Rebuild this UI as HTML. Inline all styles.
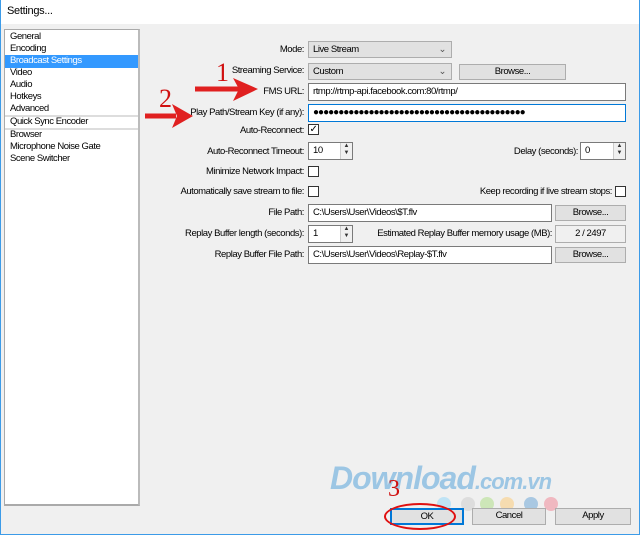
<!DOCTYPE html><html><head><style>
body{margin:0;width:640px;height:535px;overflow:hidden;background:#f0f0f0;font-family:"Liberation Sans",sans-serif;font-size:9.5px;letter-spacing:-0.45px;color:#000;position:relative}
div,span{position:absolute;box-sizing:border-box}
.l{text-align:right;white-space:nowrap;line-height:14px}
.in{background:#fff;border:1px solid #7a7a7a;padding:0 4px;line-height:15px;white-space:nowrap}
.cb{background:#e1e1e1;border:1px solid #adadad;padding:0 4px;line-height:15px}
.bt{background:#e1e1e1;border:1px solid #adadad;text-align:center;line-height:14px}
.ck{width:11px;height:11px;border:1px solid #333;background:#fff}
.sp{width:12px;background:#f0f0f0;border-left:1px solid #ccc;right:0;top:0;bottom:0;font-size:6px;line-height:7px;text-align:center;color:#333;letter-spacing:0}
.it{left:5px;white-space:nowrap;line-height:12px}
</style></head><body>
<div style="left:0;top:0;width:640px;height:24px;background:#fff"></div>
<div style="left:7px;top:5px;font-size:11px;letter-spacing:-0.3px">Settings...</div>
<div style="left:0;top:0;width:640px;height:535px;border:1px solid #3c9be8;border-top:0"></div>
<div style="left:4px;top:29px;width:136px;height:477px;background:#fff;border:1px solid #aaa;border-bottom:2px solid #aaa;border-right:2px solid #bbb">
<div style="left:0;top:25px;width:133px;height:13px;background:#3399ff"></div>
<div style="left:0;top:85px;width:133px;height:2px;background:#ddd"></div>
<div style="left:0;top:98px;width:133px;height:2px;background:#ddd"></div>
<div class="it" style="top:1px">General</div>
<div class="it" style="top:13px">Encoding</div>
<div class="it" style="top:25px;color:#fff">Broadcast Settings</div>
<div class="it" style="top:37px">Video</div>
<div class="it" style="top:49px">Audio</div>
<div class="it" style="top:61px">Hotkeys</div>
<div class="it" style="top:73px">Advanced</div>
<div class="it" style="top:86px">Quick Sync Encoder</div>
<div class="it" style="top:99px">Browser</div>
<div class="it" style="top:111px">Microphone Noise Gate</div>
<div class="it" style="top:123px">Scene Switcher</div>
</div>

<div class="l" style="right:336px;top:43px">Mode:</div>
<div class="cb" style="left:308px;top:41px;width:144px;height:17px">Live Stream<span style="right:5px;top:0;color:#555">&#8964;</span></div>
<div class="l" style="right:336px;top:64px">Streaming Service:</div>
<div class="cb" style="left:308px;top:63px;width:144px;height:17px">Custom<span style="right:5px;top:0;color:#555">&#8964;</span></div>
<div class="bt" style="left:459px;top:64px;width:107px;height:16px">Browse...</div>
<div class="l" style="right:336px;top:85px">FMS URL:</div>
<div class="in" style="left:308px;top:83px;width:318px;height:18px">rtmp://rtmp-api.facebook.com:80/rtmp/</div>
<div class="l" style="right:336px;top:106px">Play Path/Stream Key (if any):</div>
<div class="in" style="left:308px;top:104px;width:318px;height:18px;border-color:#0078d7;font-size:10px;letter-spacing:-1px">●●●●●●●●●●●●●●●●●●●●●●●●●●●●●●●●●●●●●●●●●●</div>
<div class="l" style="right:336px;top:124px">Auto-Reconnect:</div>
<div class="ck" style="left:308px;top:124px;font-size:10px;line-height:9px;text-align:center">✓</div>
<div class="l" style="right:336px;top:145px">Auto-Reconnect Timeout:</div>
<div class="in" style="left:308px;top:142px;width:45px;height:18px">10<div class="sp">▲<br>▼</div></div>
<div class="l" style="right:62px;top:145px">Delay (seconds):</div>
<div class="in" style="left:580px;top:142px;width:46px;height:18px">0<div class="sp">▲<br>▼</div></div>
<div class="l" style="right:336px;top:165px">Minimize Network Impact:</div>
<div class="ck" style="left:308px;top:166px"></div>
<div class="l" style="right:336px;top:185px">Automatically save stream to file:</div>
<div class="ck" style="left:308px;top:186px"></div>
<div class="l" style="right:28px;top:185px">Keep recording if live stream stops:</div>
<div class="ck" style="left:615px;top:186px"></div>
<div class="l" style="right:336px;top:206px">File Path:</div>
<div class="in" style="left:308px;top:204px;width:244px;height:18px">C:\Users\User\Videos\$T.flv</div>
<div class="bt" style="left:555px;top:205px;width:71px;height:16px">Browse...</div>
<div class="l" style="right:336px;top:227px">Replay Buffer length (seconds):</div>
<div class="in" style="left:308px;top:225px;width:45px;height:18px">1<div class="sp">▲<br>▼</div></div>
<div class="l" style="right:88px;top:227px">Estimated Replay Buffer memory usage (MB):</div>
<div class="bt" style="left:555px;top:225px;width:71px;height:18px;line-height:16px;background:#f0f0f0">2 / 2497</div>
<div class="l" style="right:336px;top:248px">Replay Buffer File Path:</div>
<div class="in" style="left:308px;top:246px;width:244px;height:18px">C:\Users\User\Videos\Replay-$T.flv</div>
<div class="bt" style="left:555px;top:247px;width:71px;height:16px">Browse...</div>

<div style="left:330px;top:460px;font:italic bold 32px 'Liberation Sans',sans-serif;color:#9cc6e4;letter-spacing:-1px">Download<span style="position:static;font-size:22px">.com.vn</span></div>
<div style="left:437px;top:497px;width:14px;height:14px;border-radius:7px;background:#bfe3f5"></div>
<div style="left:461px;top:497px;width:14px;height:14px;border-radius:7px;background:#ddd"></div>
<div style="left:480px;top:497px;width:14px;height:14px;border-radius:7px;background:#cde6b8"></div>
<div style="left:500px;top:497px;width:14px;height:14px;border-radius:7px;background:#f6dcb0"></div>
<div style="left:524px;top:497px;width:14px;height:14px;border-radius:7px;background:#a9c8e2"></div>
<div style="left:544px;top:497px;width:14px;height:14px;border-radius:7px;background:#f0b8c0"></div>

<div class="bt" style="left:390px;top:508px;width:74px;height:17px;border:2px solid #0078d7;line-height:13px">OK</div>
<div class="bt" style="left:472px;top:508px;width:74px;height:17px">Cancel</div>
<div class="bt" style="left:555px;top:508px;width:76px;height:17px">Apply</div>

<div style="left:384px;top:503px;width:72px;height:27px;border:2px solid #e01010;border-radius:50%"></div>
<div style="left:388px;top:476px;font:24px 'Liberation Serif',serif;color:#d01010">3</div>
<div style="left:216px;top:58px;font:26px 'Liberation Serif',serif;color:#d01010">1</div>
<div style="left:159px;top:84px;font:26px 'Liberation Serif',serif;color:#d01010">2</div>
<svg style="position:absolute;left:0;top:0" width="640" height="535">
<path d="M195 89 L240 89" stroke="#e02020" stroke-width="5"/><path d="M233 78 L258 89 L233 101 L239 89Z" fill="#e02020"/>
<path d="M145 116 L176 116" stroke="#e02020" stroke-width="5"/><path d="M172 104 L193 116 L172 128 L177 116Z" fill="#e02020"/>
</svg>
</body></html>
